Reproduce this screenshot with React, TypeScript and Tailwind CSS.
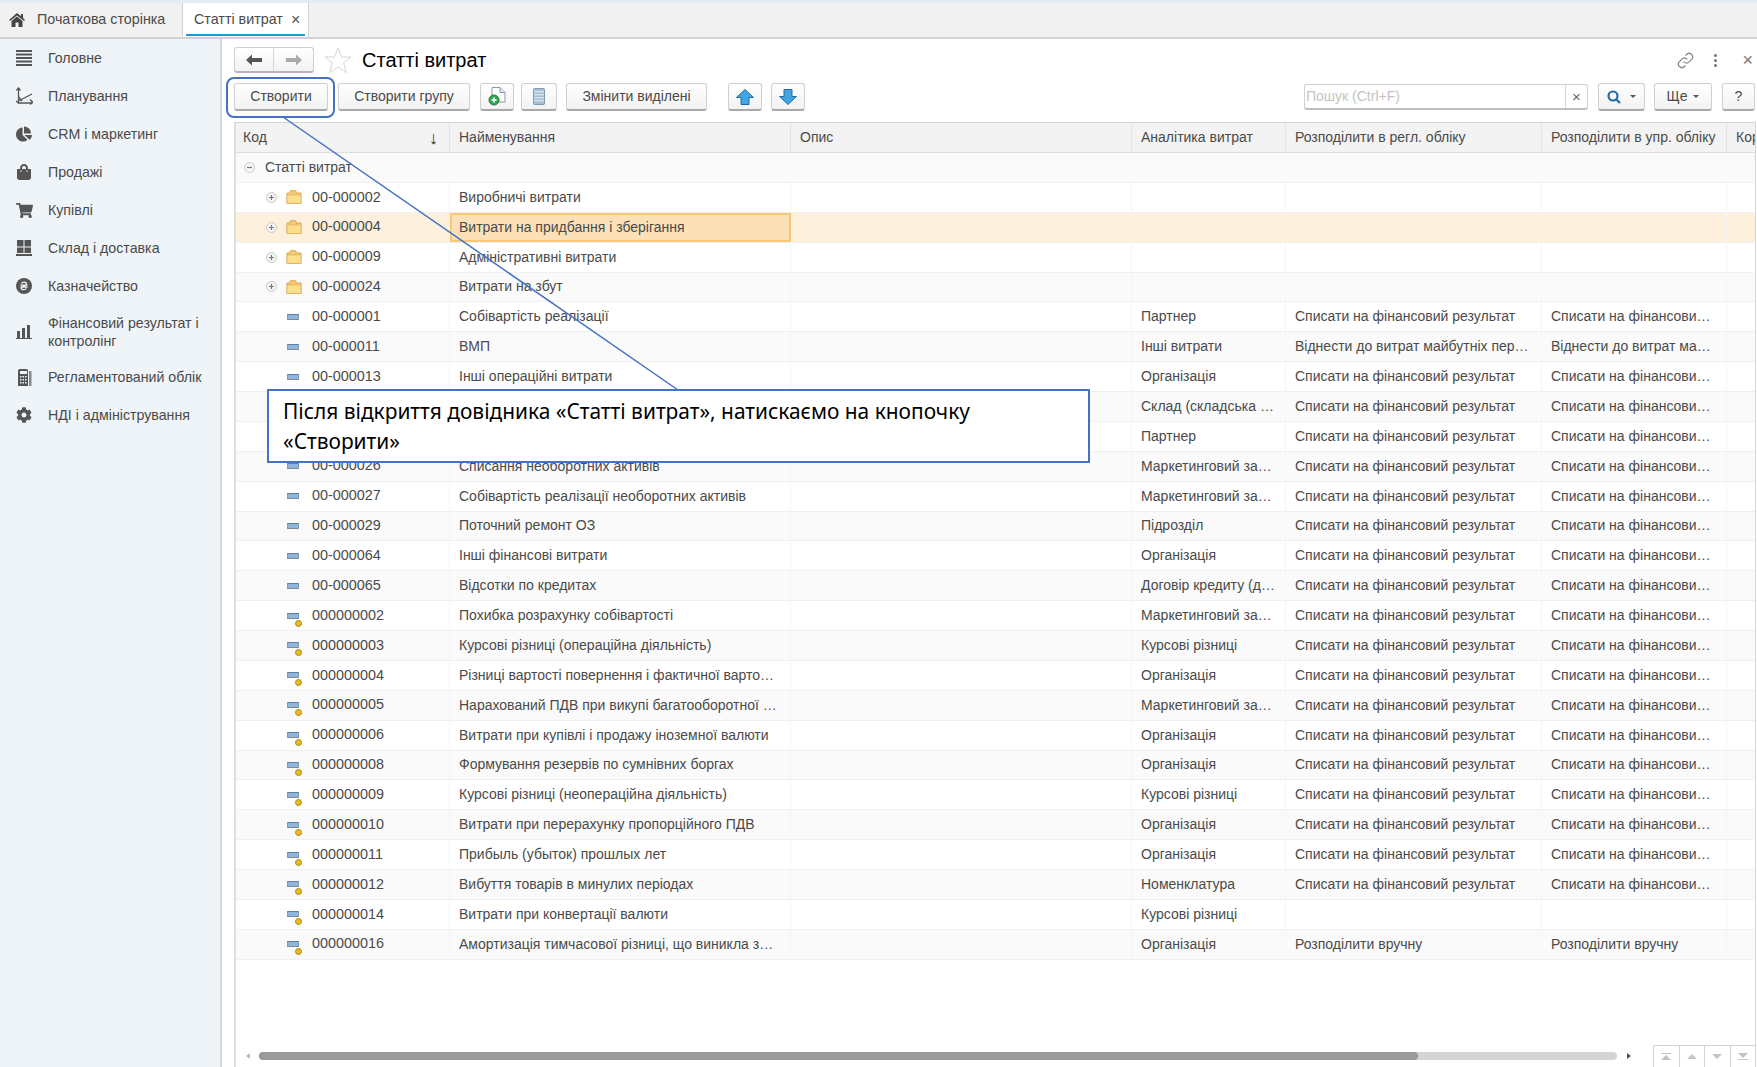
import { FaChartPie, FaCog, FaShoppingBag, FaShoppingCart } from "react-icons/fa";
import type { ReactNode } from "react";

const FIN = "Списати на фінансовий результат";
const FIN_SHORT = "Списати на фінансови…";
const MARKET = "Маркетинговий за…";

type Row = {
  code: string;
  name?: string;
  kind: "folder" | "item" | "pred";
  analytic?: string;
  reg?: string;
  mgmt?: string;
};

const rows: Row[] = [
  { code: "00-000002", name: "Виробничі витрати", kind: "folder" },
  { code: "00-000004", name: "Витрати на придбання і зберігання", kind: "folder" },
  { code: "00-000009", name: "Адміністративні витрати", kind: "folder" },
  { code: "00-000024", name: "Витрати на збут", kind: "folder" },
  { code: "00-000001", name: "Собівартість реалізації", kind: "item", analytic: "Партнер", reg: FIN, mgmt: FIN_SHORT },
  { code: "00-000011", name: "ВМП", kind: "item", analytic: "Інші витрати", reg: "Віднести до витрат майбутніх пер…", mgmt: "Віднести до витрат ма…" },
  { code: "00-000013", name: "Інші операційні витрати", kind: "item", analytic: "Організація", reg: FIN, mgmt: FIN_SHORT },
  { code: "", kind: "item", analytic: "Склад (складська …", reg: FIN, mgmt: FIN_SHORT },
  { code: "", kind: "item", analytic: "Партнер", reg: FIN, mgmt: FIN_SHORT },
  { code: "00-000026", name: "Списання необоротних активів", kind: "item", analytic: MARKET, reg: FIN, mgmt: FIN_SHORT },
  { code: "00-000027", name: "Собівартість реалізації необоротних активів", kind: "item", analytic: MARKET, reg: FIN, mgmt: FIN_SHORT },
  { code: "00-000029", name: "Поточний ремонт ОЗ", kind: "item", analytic: "Підрозділ", reg: FIN, mgmt: FIN_SHORT },
  { code: "00-000064", name: "Інші фінансові витрати", kind: "item", analytic: "Організація", reg: FIN, mgmt: FIN_SHORT },
  { code: "00-000065", name: "Відсотки по кредитах", kind: "item", analytic: "Договір кредиту (д…", reg: FIN, mgmt: FIN_SHORT },
  { code: "000000002", name: "Похибка розрахунку собівартості", kind: "pred", analytic: MARKET, reg: FIN, mgmt: FIN_SHORT },
  { code: "000000003", name: "Курсові різниці (операційна діяльність)", kind: "pred", analytic: "Курсові різниці", reg: FIN, mgmt: FIN_SHORT },
  { code: "000000004", name: "Різниці вартості повернення і фактичної варто…", kind: "pred", analytic: "Організація", reg: FIN, mgmt: FIN_SHORT },
  { code: "000000005", name: "Нарахований ПДВ при викупі багатооборотної …", kind: "pred", analytic: MARKET, reg: FIN, mgmt: FIN_SHORT },
  { code: "000000006", name: "Витрати при купівлі і продажу іноземної валюти", kind: "pred", analytic: "Організація", reg: FIN, mgmt: FIN_SHORT },
  { code: "000000008", name: "Формування резервів по сумнівних боргах", kind: "pred", analytic: "Організація", reg: FIN, mgmt: FIN_SHORT },
  { code: "000000009", name: "Курсові різниці (неопераційна діяльність)", kind: "pred", analytic: "Курсові різниці", reg: FIN, mgmt: FIN_SHORT },
  { code: "000000010", name: "Витрати при перерахунку пропорційного ПДВ", kind: "pred", analytic: "Організація", reg: FIN, mgmt: FIN_SHORT },
  { code: "000000011", name: "Прибыль (убыток) прошлых лет", kind: "pred", analytic: "Організація", reg: FIN, mgmt: FIN_SHORT },
  { code: "000000012", name: "Вибуття товарів в минулих періодах", kind: "pred", analytic: "Номенклатура", reg: FIN, mgmt: FIN_SHORT },
  { code: "000000014", name: "Витрати при конвертації валюти", kind: "pred", analytic: "Курсові різниці" },
  { code: "000000016", name: "Амортизація тимчасової різниці, що виникла з…", kind: "pred", analytic: "Організація", reg: "Розподілити вручну", mgmt: "Розподілити вручну" },
];

const Home = () => (
  <svg width="16" height="14" viewBox="0 0 16 14" fill="#444" className="shrink-0">
    <path d="M8 0L12 3.300V1h2v4l2 2-1 1-7-5.600L1 8 0 7zM2.500 8L8 3.600 13.500 8v6H9.500V9.500h-3V14H2.500z" />
  </svg>
);

const Lines = () => (
  <svg width="16" height="16" viewBox="0 0 16 16" fill="#555">
    <path d="M0 0h16v2H0zM0 3.500h16v2H0zM0 7h16v2H0zM0 10.500h16v2H0zM0 14h16v2H0z" />
  </svg>
);

const Axes = () => (
  <svg width="18" height="18" viewBox="0 0 18 18" fill="none" stroke="#555" strokeWidth="1.300">
    <path d="M3.500 1v15h14" />
    <path d="M1.500 3.500L3.500 1l2 2.500M15 12.500l2.500 2.500-2.500 2.500M1 14l2.500 2" />
    <path d="M3.500 14L17 7M3.500 10l3.500 4" />
  </svg>
);

const Stock = () => (
  <svg width="16" height="16" viewBox="0 0 16 16" fill="#555">
    <path d="M1 0h6.500v6.500H1zM8.500 0H15v6.500H8.500zM1 7.500h6.500V13H1zM8.500 7.500H15V13H8.500zM0 14h16v2H0z" />
  </svg>
);

const Coin = () => (
  <svg width="16" height="16" viewBox="0 0 16 16">
    <circle cx="8" cy="8" r="8" fill="#555" />
    <path d="M5.500 5.500c.5-1.500 5-2 5 .3 0 2.200-5.200 2.200-5.200 4.400 0 2 4.300 1.800 5.200.3M4.500 7.200h7M4.500 9h7" fill="none" stroke="#eff4f8" strokeWidth="1.300" />
  </svg>
);

const Bars = () => (
  <svg width="16" height="14" viewBox="0 0 16 14" fill="#555">
    <path d="M1 6h3v7H1zM6 3h3v10H6zM11 0h3v13h-3zM0 13h16v1H0z" />
  </svg>
);

const Calc = () => (
  <svg width="15" height="17" viewBox="0 0 15 17" fill="#555">
    <path d="M1 1.500Q1 0 2.500 0h7Q11 0 11 1.500V17H1z" />
    <path d="M12 2h2.500v15H12z" fill="#888" />
    <path d="M3 2h7v3H3z" fill="#eff4f8" />
    <path d="M3 7h1.500v1.500H3zM5.500 7H7v1.500H5.500zM8 7h1.500v1.500H8zM3 10h1.500v1.500H3zM5.500 10H7v1.500H5.500zM8 10h1.500v1.500H8zM3 13h1.500v1.500H3zM5.500 13H7v1.500H5.500zM8 13h1.500v1.500H8z" fill="#eff4f8" />
  </svg>
);

const nav: { label: string; icon: ReactNode; tall?: boolean }[] = [
  { label: "Головне", icon: <Lines /> },
  { label: "Планування", icon: <Axes /> },
  { label: "CRM і маркетинг", icon: <FaChartPie size={16} color="#555" /> },
  { label: "Продажі", icon: <FaShoppingBag size={16} color="#555" /> },
  { label: "Купівлі", icon: <FaShoppingCart size={17} color="#555" /> },
  { label: "Склад і доставка", icon: <Stock /> },
  { label: "Казначейство", icon: <Coin /> },
  { label: "Фінансовий результат і контролінг", icon: <Bars />, tall: true },
  { label: "Регламентований облік", icon: <Calc /> },
  { label: "НДІ і адміністрування", icon: <FaCog size={16} color="#555" /> },
];

const Folder = () => (
  <svg width="16" height="14" viewBox="0 0 16 14" className="shrink-0">
    <path d="M1 13.500V3h3V1.500Q4 .7 4.800.7h4.400Q10 .7 10 1.500V3h5v10.500z" fill="#f7cc6e" stroke="#d9a75a" />
    <path d="M1 5h14v8.500H1z" fill="#fcdf8c" stroke="#d9a75a" strokeWidth=".6" />
  </svg>
);

const ItemIcon = ({ pred }: { pred: boolean }) => (
  <span className="relative block w-[12px] h-[6px] shrink-0 bg-[#8fb6da] border-t border-b border-t-[#61809e] border-b-[#7d8b99] border-x border-x-[#7f9cb8]">
    {pred && <span className="absolute left-[7px] top-[6px] w-[7px] h-[7px] rounded-full bg-[#e9bb1c] border border-[#ad8a14]" />}
  </span>
);

const Toggle = ({ open }: { open?: boolean }) => (
  <svg width="11" height="11" viewBox="0 0 11 11" className="shrink-0">
    <circle cx="5.500" cy="5.500" r="5" fill="#f5f5f5" stroke="#c8c8c8" />
    <path d={open ? "M3 5.500h5" : "M3 5.500h5M5.500 3v5"} stroke="#777" strokeWidth="1.200" />
  </svg>
);

const btn =
  "flex items-center justify-center h-[28px] rounded-[3px] border border-[#cfcfcf] border-b-2 border-b-[#a9a9a9] bg-gradient-to-b from-white to-[#f2f2f2] text-[#4a4a4a] text-[14px] shrink-0";

const col = {
  code: "w-[214px] shrink-0",
  name: "w-[341px] shrink-0",
  desc: "w-[341px] shrink-0",
  analytic: "w-[154px] shrink-0",
  reg: "w-[256px] shrink-0",
  mgmt: "w-[185px] shrink-0",
  last: "flex-1 min-w-0",
};

const Cell = ({ className, children }: { className: string; children?: ReactNode }) => (
  <div className={`${className} h-full flex items-center px-[9px] overflow-hidden whitespace-nowrap border-r border-[#f5f5f5]`}>{children}</div>
);

const HeadCell = ({ className, children }: { className: string; children?: ReactNode }) => (
  <div className={`${className} h-full flex items-center px-[9px] overflow-hidden whitespace-nowrap border-r border-[#e4e4e4]`}>{children}</div>
);

const TableRow = ({ row, index }: { row: Row; index: number }) => {
  const selected = row.code === "00-000004";
  const bg = selected ? "bg-[#fdf0dd]" : index % 2 === 0 ? "bg-[#fafafa]" : "bg-white";
  return (
    <div className={`flex h-[29.890px] border-b border-[#f0f0f0] text-[#4a4a4a] ${bg}`}>
      <div className={`${col.code} h-full flex items-center whitespace-nowrap border-r border-[#f5f5f5]`}>
        {row.kind === "folder" ? (
          <div className="flex items-center pl-[30px]">
            <Toggle />
            <span className="ml-[9px]"><Folder /></span>
            <span className="ml-[10px] text-[14.400px]">{row.code}</span>
          </div>
        ) : (
          <div className="flex items-center pl-[51px]">
            <ItemIcon pred={row.kind === "pred"} />
            <span className="ml-[13px] text-[14.400px]">{row.code}</span>
          </div>
        )}
      </div>
      {selected ? (
        <div className={`${col.name} h-full flex items-center px-[7px] border-2 border-[#f8c777] bg-[#fbe0b8]`}>{row.name}</div>
      ) : (
        <Cell className={col.name}>{row.name}</Cell>
      )}
      <Cell className={col.desc} />
      <Cell className={col.analytic}>{row.analytic}</Cell>
      <Cell className={col.reg}>{row.reg}</Cell>
      <Cell className={col.mgmt}>{row.mgmt}</Cell>
      <div className={col.last} />
    </div>
  );
};

const Arrow = ({ dir, color }: { dir: "left" | "right"; color: string }) => (
  <svg width="16" height="12" viewBox="0 0 16 12" fill={color}>
    {dir === "left" ? <path d="M0 6l6-5.500V4h10v4H6v3.500z" /> : <path d="M16 6l-6-5.500V4H0v4h10v3.500z" />}
  </svg>
);

const BlueArrow = ({ down }: { down?: boolean }) => (
  <svg width="18" height="16" viewBox="0 0 18 16" className={down ? "rotate-180" : ""}>
    <path d="M9 .500L17.500 8.500H13V15.500H5V8.500H.500z" fill="#42a5e2" stroke="#1f6da8" />
  </svg>
);

export default function App() {
  return (
    <div className="relative w-[1757px] h-[1067px] overflow-hidden flex flex-col bg-white text-[14px] font-['Liberation_Sans',Arial,sans-serif]">
      {/* tabs */}
      <div className="h-[39px] shrink-0 flex items-end bg-[#f1f1f1] border-t-[3px] border-t-[#e4eef1] border-b-2 border-b-[#d2d2d2] text-[#4a4a4a] text-[14.300px]">
        <div className="w-[183px] h-full flex items-center border-r border-[#d2d2d2]">
          <span className="ml-[9px]"><Home /></span>
          <span className="ml-[12px] whitespace-nowrap">Початкова сторінка</span>
        </div>
        <div className="relative w-[126px] h-full flex items-center bg-white border-r border-[#d2d2d2] pl-[11px] whitespace-nowrap">
          Статті витрат
          <span className="ml-[8px] text-[#555] text-[16px] leading-none">×</span>
          <span className="absolute left-[3px] right-[3px] bottom-[1px] h-[2px] bg-[#1e9ad6]" />
        </div>
      </div>

      <div className="flex-1 flex min-h-0">
        {/* sidebar */}
        <aside className="w-[222px] shrink-0 bg-[#eff4f8] border-r-2 border-[#d6d9db] text-[#4a4a4a] text-[14.200px]">
          {nav.map((item) => (
            <div key={item.label} className={`flex items-center ${item.tall ? "h-[53px]" : "h-[38px]"}`}>
              <span className="w-[48px] shrink-0 flex justify-center">{item.icon}</span>
              <span className="w-[160px] leading-[18px]">{item.label}</span>
            </div>
          ))}
        </aside>

        {/* content */}
        <main className="flex-1 min-w-0 flex flex-col pl-[12px] pt-[8px]">
          <div className="h-[26px] flex items-center shrink-0 pr-[4px]">
            <div className="w-[80px] h-[26px] flex rounded-[3px] border border-[#cfcfcf] border-b-2 border-b-[#b5b5b5] bg-gradient-to-b from-white to-[#f2f2f2]">
              <div className="w-[40px] flex items-center justify-center border-r border-[#d5d5d5]"><Arrow dir="left" color="#555" /></div>
              <div className="w-[40px] flex items-center justify-center"><Arrow dir="right" color="#aaa" /></div>
            </div>
            <svg width="28" height="27" viewBox="0 0 28 27" className="ml-[10px]" fill="#fff" stroke="#d4d4d4">
              <path d="M14 1l3.700 9h9.300l-7.400 6 2.800 9.500L14 20l-8.400 5.500L8.400 16 1 10h9.300z" />
            </svg>
            <h1 className="ml-[10px] text-[20px] text-black font-normal whitespace-nowrap">Статті витрат</h1>
            <div className="ml-auto flex items-center text-[#777]">
              <svg width="17" height="17" viewBox="0 0 24 24" fill="none" stroke="#888" strokeWidth="1.800" strokeLinecap="round">
                <path d="M10 14a5 5 0 0 0 7 0l4-4a5 5 0 0 0-7-7l-1.500 1.500" />
                <path d="M14 10a5 5 0 0 0-7 0l-4 4a5 5 0 0 0 7 7l1.500-1.500" />
              </svg>
              <span className="ml-[20px] flex flex-col gap-[2px]">
                <span className="w-[3px] h-[3px] bg-[#777] rounded-full" />
                <span className="w-[3px] h-[3px] bg-[#777] rounded-full" />
                <span className="w-[3px] h-[3px] bg-[#777] rounded-full" />
              </span>
              <span className="ml-[25px] text-[18px] leading-none">×</span>
            </div>
          </div>

          <div className="h-[28px] mt-[10px] flex items-center shrink-0 pr-[2px]">
            <div className={`${btn} w-[94px]`}>Створити</div>
            <div className={`${btn} w-[132px] ml-[10px]`}>Створити групу</div>
            <div className={`${btn} w-[34px] ml-[10px]`}>
              <svg width="18" height="19" viewBox="0 0 18 19">
                <path d="M4 .500h8l5 5V15H4z" fill="#fff" stroke="#8a98a5" />
                <path d="M12 .500v5h5" fill="#dfe7ee" stroke="#8a98a5" />
                <circle cx="6" cy="13" r="5" fill="#35a854" stroke="#1d7a38" />
                <path d="M3.500 13h5M6 10.500v5" stroke="#fff" strokeWidth="1.500" />
              </svg>
            </div>
            <div className={`${btn} w-[36px] ml-[7px]`}>
              <svg width="12" height="17" viewBox="0 0 12 17" fill="#a7bfd3" stroke="#7f9ab0">
                <rect x=".500" y=".500" width="11" height="16" rx="1" />
                <path d="M1 3.800h10M1 6.800h10M1 9.800h10M1 12.800h10" stroke="#eaf1f6" />
              </svg>
            </div>
            <div className={`${btn} w-[141px] ml-[9px]`}>Змінити виділені</div>
            <div className={`${btn} w-[34px] ml-[21px]`}><BlueArrow /></div>
            <div className={`${btn} w-[34px] ml-[9px]`}><BlueArrow down /></div>
            <div className="ml-auto flex items-center">
              <div className="w-[284px] h-[26px] flex rounded-[3px] border border-[#cfcfcf] border-b-2 border-b-[#bdbdbd] bg-white">
                <span className="flex-1 flex items-center pl-[1px] text-[#c4c4c4]">Пошук (Ctrl+F)</span>
                <span className="w-[22px] flex items-center justify-center border-l border-[#d5d5d5] text-[#666] text-[15px] leading-none">×</span>
              </div>
              <div className={`${btn} w-[47px] ml-[10px]`}>
                <svg width="14" height="14" viewBox="0 0 14 14" fill="none" stroke="#1f6da8" strokeWidth="2.200">
                  <circle cx="6" cy="6" r="4.500" />
                  <path d="M9.500 9.500l3.500 3.500" />
                </svg>
                <span className="ml-[9px] w-0 h-0 border-x-[3px] border-x-transparent border-t-[3px] border-t-[#555]" />
              </div>
              <div className={`${btn} w-[58px] ml-[9px]`}>
                Ще
                <span className="ml-[6px] w-0 h-0 border-x-[3px] border-x-transparent border-t-[3px] border-t-[#555]" />
              </div>
              <div className={`${btn} w-[33px] ml-[10px]`}>?</div>
            </div>
          </div>

          {/* table */}
          <div className="relative flex-1 min-h-0 mt-[11px] border-t border-l-2 border-r border-[#d4d4d4] border-l-[#dedede] mr-[1px] overflow-hidden">
            <div className="flex h-[30px] bg-[#f3f3f3] border-b border-[#dddddd] text-[#4a4a4a]">
              <div className={`${col.code} h-full flex items-center pl-[7px] pr-[11px] border-r border-[#e4e4e4]`}>
                <span>Код</span>
                <span className="ml-auto text-[#333] text-[18px] leading-none">↓</span>
              </div>
              <HeadCell className={col.name}>Найменування</HeadCell>
              <HeadCell className={col.desc}>Опис</HeadCell>
              <HeadCell className={col.analytic}>Аналітика витрат</HeadCell>
              <HeadCell className={col.reg}>Розподілити в регл. обліку</HeadCell>
              <HeadCell className={col.mgmt}>Розподілити в упр. обліку</HeadCell>
              <div className={`${col.last} h-full flex items-center pl-[9px] overflow-hidden whitespace-nowrap`}>Кор</div>
            </div>
            <div className="flex h-[29.890px] border-b border-[#f0f0f0] bg-[#fafafa] items-center pl-[8px] text-[#4a4a4a]">
              <Toggle open />
              <span className="ml-[10px]">Статті витрат</span>
            </div>
            {rows.map((row, i) => (
              <TableRow key={row.code + i} row={row} index={i + 1} />
            ))}

            {/* bottom scrollbar and pager */}
            <div className="absolute left-0 right-0 bottom-0 h-[22px] flex items-center bg-white">
              <span className="ml-[10px] w-0 h-0 border-y-[3px] border-y-transparent border-r-[4px] border-r-[#bbb]" />
              <div className="ml-[9px] w-[1358px] h-[8px] rounded-full bg-[#d4d4d4]">
                <div className="w-[1159px] h-full rounded-full bg-[#9a9a9a]" />
              </div>
              <span className="ml-[10px] w-0 h-0 border-y-[3px] border-y-transparent border-l-[4px] border-l-[#555]" />
              <div className="ml-auto w-[102px] h-full flex border-t border-l border-[#d4d4d4]">
                <div className="flex-1 flex flex-col items-center justify-center border-r border-[#d4d4d4]">
                  <span className="w-[10px] h-[1px] bg-[#c4c4c4]" />
                  <span className="mt-[1px] w-0 h-0 border-x-[5px] border-x-transparent border-b-[5px] border-b-[#c4c4c4]" />
                </div>
                <div className="flex-1 flex items-center justify-center border-r border-[#d4d4d4]">
                  <span className="w-0 h-0 border-x-[5px] border-x-transparent border-b-[5px] border-b-[#c4c4c4]" />
                </div>
                <div className="flex-1 flex items-center justify-center border-r border-[#d4d4d4]">
                  <span className="w-0 h-0 border-x-[5px] border-x-transparent border-t-[5px] border-t-[#c4c4c4]" />
                </div>
                <div className="flex-1 flex flex-col items-center justify-center">
                  <span className="w-0 h-0 border-x-[5px] border-x-transparent border-t-[5px] border-t-[#c4c4c4]" />
                  <span className="mt-[1px] w-[10px] h-[1px] bg-[#c4c4c4]" />
                </div>
              </div>
            </div>
          </div>
        </main>
      </div>

      {/* annotation over the page */}
      <svg className="absolute left-0 top-0 pointer-events-none" width="1757" height="1067" fill="none">
        <path d="M283 117L678 390" stroke="#4472c4" strokeWidth="1.500" />
      </svg>
      <div className="absolute left-[226px] top-[77px] w-[109px] h-[41px] rounded-[8px] border-2 border-[#4472c4]" />
      <div className="absolute left-[267px] top-[389px] w-[823px] h-[74px] border-2 border-[#4472c4] bg-white pl-[14px] pr-[40px] pt-[5px] text-[20.900px] leading-[30px] text-black font-['Noto_Sans',sans-serif]">
        Після відкриття довідника «Статті витрат», натискаємо на кнопочку «Створити»
      </div>
    </div>
  );
}
